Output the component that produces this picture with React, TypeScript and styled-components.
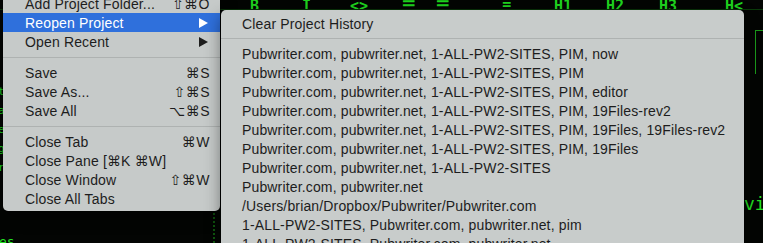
import React from "react";
import styled, { createGlobalStyle } from "styled-components";

const GlobalStyle = createGlobalStyle`
  html, body { margin: 0; padding: 0; background: #000; overflow: hidden; }
  * { box-sizing: border-box; }
`;

const Screen = styled.div`
  position: relative;
  width: 763px;
  height: 243px;
  overflow: hidden;
  background: #030503;
  display: flex;
  flex-direction: column;
  font-family: "Liberation Sans", "DejaVu Sans", sans-serif;
`;

const Toolbar = styled.div`
  height: 10px;
  display: flex;
  align-items: flex-end;
  overflow: hidden;
  padding-left: 250px;
  border-bottom: 1px solid #0a3a0a;
`;

const ToolGlyph = styled.span<{ $w: number }>`
  width: ${(p) => p.$w}px;
  flex: none;
  color: #1fd31f;
  font: bold 15px/15px "DejaVu Sans Mono", monospace;
  margin-bottom: -5px;
`;

const EditorBody = styled.div`
  flex: 1;
  display: flex;
  justify-content: space-between;
  font: 15px/19px "DejaVu Sans Mono", monospace;
  color: #22e022;
`;

const LeftGutter = styled.div`
  width: 215px;
  display: flex;
  flex-direction: column;
  justify-content: space-between;
  padding-top: 78px;
  border-right: 2px dotted #0f5a0f;
`;

const GutterLines = styled.div`
  display: flex;
  flex-direction: column;
  gap: 12px;
  margin-left: -2px;
  font-size: 11px;
  line-height: 7px;
`;

const GutterText = styled.div`
  margin-left: -1px;
  font-size: 13px;
  line-height: 11px;
  height: 7px;
  overflow: hidden;
`;

const RightPane = styled.div`
  width: 19px;
  display: flex;
  flex-direction: column;
  padding-top: 20px;
`;

const GreenBox = styled.div`
  height: 44px;
  border-top: 1px solid #1a9a1a;
  border-left: 1px solid #1a9a1a;
  margin-left: 11px;
`;

const ViText = styled.div`
  margin-top: 120px;
  font-size: 18px;
  color: #22e022;
`;

const Menu = styled.div`
  position: absolute;
  background: #c6cac9;
  color: #1d1d1d;
  font-size: 14px;
  letter-spacing: 0.15px;
  box-shadow: 0 0 0 0.5px rgba(0, 0, 0, 0.3), 0 6px 16px rgba(0, 0, 0, 0.45);
`;

const FileMenu = styled(Menu)`
  left: 3px;
  top: -10px;
  width: 217px;
  padding: 4px 0 3px;
  border-radius: 0 0 5px 5px;
`;

const SubMenu = styled(Menu)`
  left: 221px;
  top: 10px;
  width: 523px;
  height: 260px;
  padding: 4px 0;
  background: #c8cccb;
  border-radius: 5px 5px 0 0;
`;

const Row = styled.div<{ $active?: boolean; $pad: number }>`
  height: 19px;
  display: flex;
  align-items: center;
  padding: 0 8px 0 ${(p) => p.$pad}px;
  white-space: nowrap;
  background: ${(p) => (p.$active ? "#2f70dc" : "transparent")};
  color: ${(p) => (p.$active ? "#ffffff" : "#1d1d1d")};
`;

const Label = styled.span`
  flex: 1;
`;

const Shortcut = styled.span`
  font-family: "Liberation Sans", "DejaVu Sans", sans-serif;
  letter-spacing: 0.5px;
  padding-right: 2px;
`;

const Separator = styled.div<{ $h: number }>`
  height: ${(p) => p.$h}px;
  display: flex;
  align-items: center;
  &::after {
    content: "";
    flex: 1;
    height: 1px;
    background: #aeb2b1;
  }
`;

const Arrow = ({ color }: { color: string }) => (
  <svg width="9" height="10" viewBox="0 0 9 10" style={{ marginRight: 4 }}>
    <polygon points="0,0 9,5 0,10" fill={color} />
  </svg>
);

type Item =
  | { sep: true }
  | { label: string; key?: string; sub?: boolean; active?: boolean };

const fileItems: Item[] = [
  { label: "Add Project Folder...", key: "⇧⌘O" },
  { label: "Reopen Project", sub: true, active: true },
  { label: "Open Recent", sub: true },
  { sep: true },
  { label: "Save", key: "⌘S" },
  { label: "Save As...", key: "⇧⌘S" },
  { label: "Save All", key: "⌥⌘S" },
  { sep: true },
  { label: "Close Tab", key: "⌘W" },
  { label: "Close Pane [⌘K ⌘W]" },
  { label: "Close Window", key: "⇧⌘W" },
  { label: "Close All Tabs" },
];

const projects = [
  "Pubwriter.com, pubwriter.net, 1-ALL-PW2-SITES, PIM, now",
  "Pubwriter.com, pubwriter.net, 1-ALL-PW2-SITES, PIM",
  "Pubwriter.com, pubwriter.net, 1-ALL-PW2-SITES, PIM, editor",
  "Pubwriter.com, pubwriter.net, 1-ALL-PW2-SITES, PIM, 19Files-rev2",
  "Pubwriter.com, pubwriter.net, 1-ALL-PW2-SITES, PIM, 19Files, 19Files-rev2",
  "Pubwriter.com, pubwriter.net, 1-ALL-PW2-SITES, PIM, 19Files",
  "Pubwriter.com, pubwriter.net, 1-ALL-PW2-SITES",
  "Pubwriter.com, pubwriter.net",
  "/Users/brian/Dropbox/Pubwriter/Pubwriter.com",
  "1-ALL-PW2-SITES, Pubwriter.com, pubwriter.net, pim",
  "1-ALL-PW2-SITES, Pubwriter.com, pubwriter.net",
];

const tools: [string, number][] = [
  ["B", 52],
  ["I", 48],
  ["<>", 52],
  ["☰", 34],
  ["☰", 66],
  ["≡", 52],
  ["H1", 52],
  ["H2", 53],
  ["H3", 66],
  ["H<", 30],
];

const gutterBits = ["t", "a", "e", "g", "r"];

export default function App() {
  return (
    <>
      <GlobalStyle />
      <Screen>
        <Toolbar>
          {tools.map(([t, w], i) => (
            <ToolGlyph key={i} $w={w}>
              {t}
            </ToolGlyph>
          ))}
        </Toolbar>
        <EditorBody>
          <LeftGutter>
            <GutterLines>
              {gutterBits.map((b, i) => (
                <span key={i}>{b}</span>
              ))}
            </GutterLines>
            <GutterText>es</GutterText>
          </LeftGutter>
          <RightPane>
            <GreenBox />
            <ViText>vi</ViText>
          </RightPane>
        </EditorBody>

        <FileMenu>
          {fileItems.map((it, i) =>
            "sep" in it ? (
              <Separator key={i} $h={12} />
            ) : (
              <Row key={i} $pad={22} $active={it.active}>
                <Label>{it.label}</Label>
                {it.key && <Shortcut>{it.key}</Shortcut>}
                {it.sub && <Arrow color={it.active ? "#fff" : "#1d1d1d"} />}
              </Row>
            )
          )}
        </FileMenu>

        <SubMenu>
          <Row $pad={21}>
            <Label>Clear Project History</Label>
          </Row>
          <Separator $h={11} />
          {projects.map((p, i) => (
            <Row key={i} $pad={21}>
              <Label>{p}</Label>
            </Row>
          ))}
        </SubMenu>
      </Screen>
    </>
  );
}
